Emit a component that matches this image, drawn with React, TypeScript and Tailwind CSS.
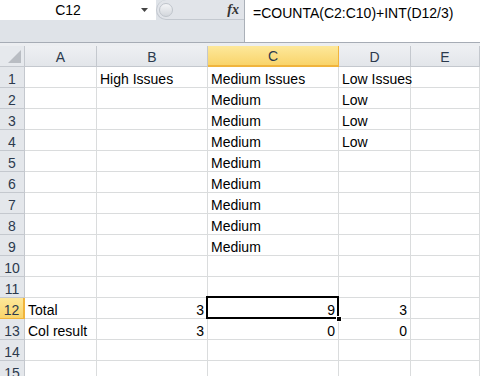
import React from "react";

type Row = { n: number; cells: [string, string, string, string, string] };

const rows: Row[] = [
  { n: 1, cells: ["", "High Issues", "Medium Issues", "Low Issues", ""] },
  { n: 2, cells: ["", "", "Medium", "Low", ""] },
  { n: 3, cells: ["", "", "Medium", "Low", ""] },
  { n: 4, cells: ["", "", "Medium", "Low", ""] },
  { n: 5, cells: ["", "", "Medium", "", ""] },
  { n: 6, cells: ["", "", "Medium", "", ""] },
  { n: 7, cells: ["", "", "Medium", "", ""] },
  { n: 8, cells: ["", "", "Medium", "", ""] },
  { n: 9, cells: ["", "", "Medium", "", ""] },
  { n: 10, cells: ["", "", "", "", ""] },
  { n: 11, cells: ["", "", "", "", ""] },
  { n: 12, cells: ["Total", "3", "9", "3", ""] },
  { n: 13, cells: ["Col result", "3", "0", "0", ""] },
  { n: 14, cells: ["", "", "", "", ""] },
  { n: 15, cells: ["", "", "", "", ""] },
];

const widths = ["w-[72px]", "w-[111px]", "w-[131px]", "w-[72px]", "flex-1"];
const letters = ["A", "B", "C", "D", "E"];

function isNumber(v: string) {
  return v !== "" && !isNaN(Number(v));
}

function FormulaBar() {
  return (
    <div className="h-[46px] flex flex-col bg-[#dfe3e8]">
      <div className="flex h-[42px]">
        <div className="w-[244px] flex flex-col">
          <div className="h-[20px] flex">
            <div className="w-[156px] bg-white flex items-center relative pt-[1px]">
              <span className="w-[136px] text-center text-[14px] text-black">C12</span>
              <svg width="8" height="5" viewBox="0 0 8 5" className="absolute left-[141px] top-[8px]">
                <path d="M0 0 H7 L3.5 4 Z" fill="#444" />
              </svg>
            </div>
            <div className="flex-1 flex items-center bg-[#e1e4e9] rounded-l-[11px] border-l border-b border-[#c3c8cf]">
              <div className="w-[14px] h-[14px] rounded-full ml-[2px] bg-gradient-to-b from-[#f4f5f7] to-[#d3d7dc] border border-[#bfc4cb]" />
              <span className="ml-auto mr-[5px] text-[14px] italic font-bold text-[#333] font-['Liberation_Serif',serif]">
                fx
              </span>
            </div>
          </div>
          <div className="flex-1 bg-[#dfe3e8]" />
        </div>
        <div className="flex-1 bg-white border-l border-[#aab0b8] pl-[8px] pt-[3px] text-[14px] text-black">
          =COUNTA(C2:C10)+INT(D12/3)
        </div>
      </div>
      <div className="h-[1px] bg-[#a6acb5]" />
      <div className="flex-1 bg-[#eceef1]" />
    </div>
  );
}

function HeaderRow() {
  return (
    <div className="flex h-[21px]">
      <div className="w-[25px] border-r border-b border-[#c4c8ce] bg-[#e6e9ed] flex items-end justify-end p-[3px]">
        <svg width="13" height="13" viewBox="0 0 13 13">
          <path d="M13 0 V13 H0 Z" fill="#b9bdc3" />
        </svg>
      </div>
      {letters.map((l, i) => {
        const sel = l === "C";
        return (
          <div
            key={l}
            className={`${widths[i]} flex items-center justify-center pt-[2px] text-[14px] border-r ${
              sel
                ? "bg-gradient-to-b from-[#fde89a] to-[#f9d46a] border-b-2 border-[#f0b43c] text-[#2c3a4d]"
                : "bg-gradient-to-b from-[#eef0f3] to-[#e3e6ea] border-b border-[#c4c8ce] text-[#2c3a4d]"
            }`}
          >
            {l}
          </div>
        );
      })}
    </div>
  );
}

function DataRow({ row }: { row: Row }) {
  const selRow = row.n === 12;
  return (
    <div className="flex h-[21px]">
      <div
        className={`w-[25px] flex items-center justify-center pt-[4px] text-[14px] text-[#2c3a4d] border-b ${
          selRow
            ? "bg-gradient-to-b from-[#fde89a] to-[#f9d46a] border-r-2 border-[#f0b43c]"
            : "bg-[#e4e7eb] border-r border-[#c4c8ce]"
        }`}
      >
        {row.n}
      </div>
      {row.cells.map((v, i) => {
        const active = selRow && i === 2;
        return (
          <div
            key={i}
            className={`${widths[i]} relative flex items-center pt-[4px] border-r border-b border-[#dadcdd] text-[14px] text-black whitespace-nowrap overflow-visible ${
              isNumber(v) ? "justify-end pr-[3px]" : "pl-[3px]"
            }`}
          >
            <span className="relative z-10">{v}</span>
            {active && (
              <>
                <div className="absolute left-[-2px] top-[-2px] right-[-1px] bottom-[-1px] border-2 border-black z-20" />
                <div className="absolute right-[-4px] bottom-[-4px] w-[6px] h-[6px] bg-black border border-white z-20" />
              </>
            )}
          </div>
        );
      })}
    </div>
  );
}

export default function App() {
  return (
    <div className="w-[480px] h-[376px] overflow-hidden bg-white font-['Liberation_Sans',Arial,sans-serif]">
      <FormulaBar />
      <HeaderRow />
      {rows.map((r) => (
        <DataRow key={r.n} row={r} />
      ))}
    </div>
  );
}
